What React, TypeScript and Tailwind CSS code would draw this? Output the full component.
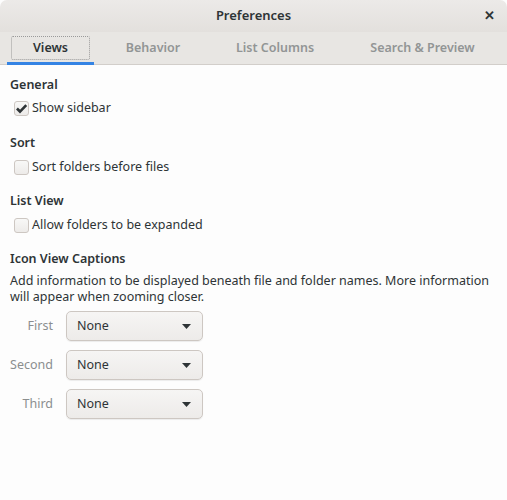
import { useState } from "react";

const tabs = [
  { name: "Views", w: "w-[87px]" },
  { name: "Behavior", w: "w-[118px]" },
  { name: "List Columns", w: "w-[126px]" },
  { name: "Search & Preview", w: "w-[169px]" },
];

function Check({ checked, label }: { checked: boolean; label: string }) {
  return (
    <div className="flex items-center h-[18px] pl-[4px] gap-[3px]">
      <div className="w-[15px] h-[15px] rounded-[3px] border border-[#cdc7c2] bg-gradient-to-b from-[#f8f8f7] to-[#edebe9] flex items-center justify-center">
        {checked && (
          <svg width="13" height="13" viewBox="0 0 12 12">
            <path d="M1.8 6 L4.6 8.8 L10.4 2.8" fill="none" stroke="#2e3436" strokeWidth="2.4" />
          </svg>
        )}
      </div>
      <span>{label}</span>
    </div>
  );
}

function Combo({ label }: { label: string }) {
  return (
    <div className="flex items-center">
      <span className="w-[53px] text-right text-[#8b8e8f]">{label}</span>
      <div className="ml-[13px] w-[137px] h-[30px] rounded-[5px] border border-[#cdc7c2] bg-gradient-to-b from-[#f6f5f4] to-[#edebe9] shadow-[0_1px_1px_rgba(0,0,0,0.07)] flex items-center justify-between pl-[10px] pr-[11px]">
        <span>None</span>
        <svg width="9" height="5" viewBox="0 0 9 5">
          <path d="M0 0 H9 L4.5 5 Z" fill="#2e3436" />
        </svg>
      </div>
    </div>
  );
}

export default function App() {
  const [active] = useState(0);

  return (
    <div className="w-[507px] h-[500px] bg-[#fdfdfd] text-[#2e3436] text-[12.5px] font-['Noto_Sans',sans-serif] flex flex-col">
      <div className="h-[32px] bg-gradient-to-b from-[#eceae8] to-[#e3e0dd] rounded-t-[7px] flex items-center justify-center relative">
        <span className="font-semibold text-[13px] text-[#2e3436]">Preferences</span>
        <span className="absolute right-[12px] top-[9px] text-[13px] font-bold leading-none">✕</span>
      </div>
      <div className="h-[33px] bg-[#e8e6e3] border-b border-[#d2ceca] flex pl-[7px]">
        {tabs.map((t, i) => (
          <div
            key={t.name}
            className={`${t.w} h-full flex items-center justify-center relative font-semibold text-[12.5px] ${
              i === active ? "text-[#2e3436]" : "text-[#929595]"
            }`}
          >
            {i === active && (
              <>
                <div className="absolute left-[4px] right-[4px] top-[4px] bottom-[4px] border border-dotted border-[#9a9a9a] rounded-[2px]" />
                <div className="absolute left-0 right-0 bottom-[-1px] h-[3px] bg-[#3584e4]" />
              </>
            )}
            <span className="relative">{t.name}</span>
          </div>
        ))}
      </div>
      <div className="flex flex-col px-[10px] pt-[11px]">
        <div className="font-semibold h-[18px] flex items-center">General</div>
        <div className="mt-[5px]">
          <Check checked label="Show sidebar" />
        </div>
        <div className="font-semibold h-[18px] flex items-center mt-[17px]">Sort</div>
        <div className="mt-[6px]">
          <Check checked={false} label="Sort folders before files" />
        </div>
        <div className="font-semibold h-[18px] flex items-center mt-[16px]">List View</div>
        <div className="mt-[6px]">
          <Check checked={false} label="Allow folders to be expanded" />
        </div>
        <div className="font-semibold h-[18px] flex items-center mt-[16px]">Icon View Captions</div>
        <p className="mt-[5px] leading-[16px] pr-[5px]">
          Add information to be displayed beneath file and folder names. More information will appear when zooming closer.
        </p>
        <div className="flex flex-col gap-[9px] mt-[6px] -ml-[10px]">
          <Combo label="First" />
          <Combo label="Second" />
          <Combo label="Third" />
        </div>
      </div>
    </div>
  );
}
